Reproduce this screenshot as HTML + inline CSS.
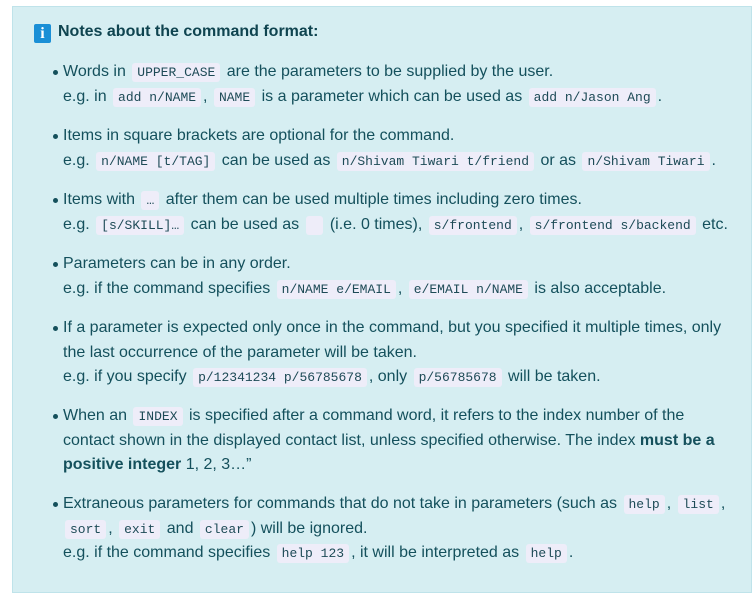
<!DOCTYPE html>
<html><head><meta charset="utf-8"><style>
body{margin:0;width:754px;height:596px;background:#fff;font-family:"Liberation Sans",sans-serif;color:#14505c;overflow:hidden}
.box{position:absolute;left:12px;top:6px;width:738px;height:585px;background:#d6eef2;border:1px solid #bfe3ea}
.l{position:absolute;left:63px;height:24px;line-height:24px;font-size:16px;white-space:nowrap;letter-spacing:0px}
.b::before{content:"";position:absolute;left:-10px;top:10px;width:5px;height:5px;border-radius:50%;background:#14505c}
code{font-family:"Liberation Mono",monospace;font-size:13px;background:#eeedf9;padding:2px 5px;border-radius:3px;color:#1d4a56;margin:0 2px}
.t{position:absolute;left:58px;top:20px;font-size:16px;font-weight:bold;line-height:24px;color:#0f4450}
.i{position:absolute;left:34px;top:24px;width:17px;height:19px;background:#1a8fd6;border-radius:2px;color:#fff;font-weight:bold;font-size:16px;line-height:19px;text-align:center;font-family:"Liberation Serif",serif}
</style></head><body>
<div class="box"></div>
<div class="i">i</div>
<div class="t">Notes about the command format:</div>
<div class="l b" style="top:60px">Words in <code>UPPER_CASE</code> are the parameters to be supplied by the user.</div>
<div class="l" style="top:85px">e.g. in <code>add n/NAME</code>, <code>NAME</code> is a parameter which can be used as <code>add n/Jason Ang</code>.</div>
<div class="l b" style="top:124px">Items in square brackets are optional for the command.</div>
<div class="l" style="top:149px">e.g. <code>n/NAME [t/TAG]</code> can be used as <code>n/Shivam Tiwari t/friend</code> or as <code>n/Shivam Tiwari</code>.</div>
<div class="l b" style="top:188px">Items with <code>…</code> after them can be used multiple times including zero times.</div>
<div class="l" style="top:213px">e.g. <code>[s/SKILL]…</code> can be used as <code>&nbsp;</code> (i.e. 0 times), <code>s/frontend</code>, <code>s/frontend s/backend</code> etc.</div>
<div class="l b" style="top:252px">Parameters can be in any order.</div>
<div class="l" style="top:277px">e.g. if the command specifies <code>n/NAME e/EMAIL</code>, <code>e/EMAIL n/NAME</code> is also acceptable.</div>
<div class="l b" style="top:316px">If a parameter is expected only once in the command, but you specified it multiple times, only</div>
<div class="l" style="top:341px">the last occurrence of the parameter will be taken.</div>
<div class="l" style="top:365px">e.g. if you specify <code>p/12341234 p/56785678</code>, only <code>p/56785678</code> will be taken.</div>
<div class="l b" style="top:404px">When an <code>INDEX</code> is specified after a command word, it refers to the index number of the</div>
<div class="l" style="top:429px">contact shown in the displayed contact list, unless specified otherwise. The index <b>must be a</b></div>
<div class="l" style="top:453px"><b>positive integer</b> 1, 2, 3…”</div>
<div class="l b" style="top:492px">Extraneous parameters for commands that do not take in parameters (such as <code>help</code>, <code>list</code>,</div>
<div class="l" style="top:517px"><code>sort</code>, <code>exit</code> and <code>clear</code>) will be ignored.</div>
<div class="l" style="top:541px">e.g. if the command specifies <code>help 123</code>, it will be interpreted as <code>help</code>.</div>
</body></html>
